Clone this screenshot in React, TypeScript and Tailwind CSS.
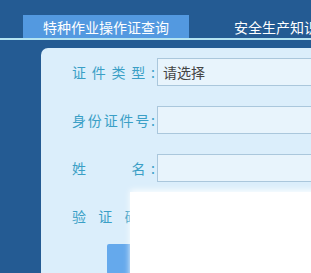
import React from "react";

const font = { fontFamily: '"Microsoft YaHei", "Noto Sans CJK SC", "Liberation Sans", sans-serif' };

function Row({ label, value }: { label: React.ReactNode; value?: string }) {
  return (
    <div className="flex items-center h-[28px] mb-[20px]">
      <div className="w-[85px] shrink-0 text-[14px] text-[#3a9fc6] flex justify-between pr-[2px]">{label}</div>
      <div className="h-[28px] w-[200px] shrink-0 border border-[#aac7dc] bg-[#e8f4fc] text-[14px] text-[#444] flex items-center pl-[5px]">
        {value}
      </div>
    </div>
  );
}

export default function App() {
  return (
    <div className="relative w-[311px] h-[273px] overflow-hidden bg-[#245b93]" style={font}>
      <div className="pt-[15px]">
        <div className="flex h-[25px] border-b-2 border-[#b4e4f2] whitespace-nowrap overflow-hidden">
          <div className="ml-[23px] w-[166px] shrink-0 h-[24px] bg-[#5399e0] text-white text-[14px] flex items-center justify-center">
            特种作业操作证查询
          </div>
          <div className="ml-[45px] shrink-0 h-[24px] text-white text-[14px] flex items-center">安全生产知识</div>
        </div>
      </div>
      <div className="ml-[41px] mt-[8px] w-[300px] h-[260px] bg-[#dbeefb] rounded-tl-[7px] pl-[31px] pt-[10px] whitespace-nowrap">
        <Row
          label={
            <>
              <span>证</span><span>件</span><span>类</span><span>型</span><span>:</span>
            </>
          }
          value="请选择"
        />
        <Row
          label={
            <>
              <span>身</span><span>份</span><span>证</span><span>件</span><span>号</span><span>:</span>
            </>
          }
        />
        <Row
          label={
            <>
              <span>姓</span><span>名</span>
              <span className="-ml-[40px]">:</span>
            </>
          }
        />
        <div className="flex items-center h-[28px]">
          <div className="w-[85px] shrink-0 text-[14px] text-[#3a9fc6] flex justify-between pr-[2px]">
            <span>验</span><span>证</span><span>码</span><span>:</span>
          </div>
        </div>
        <div className="ml-[35px] mt-[14px] w-[90px] h-[30px] bg-[#65a9ec] rounded-[2px]"></div>
      </div>
      <div className="absolute left-[130px] top-[192px] w-[200px] h-[100px] bg-white shadow-[0_-2px_6px_rgba(255,255,255,0.9)]"></div>
    </div>
  );
}
